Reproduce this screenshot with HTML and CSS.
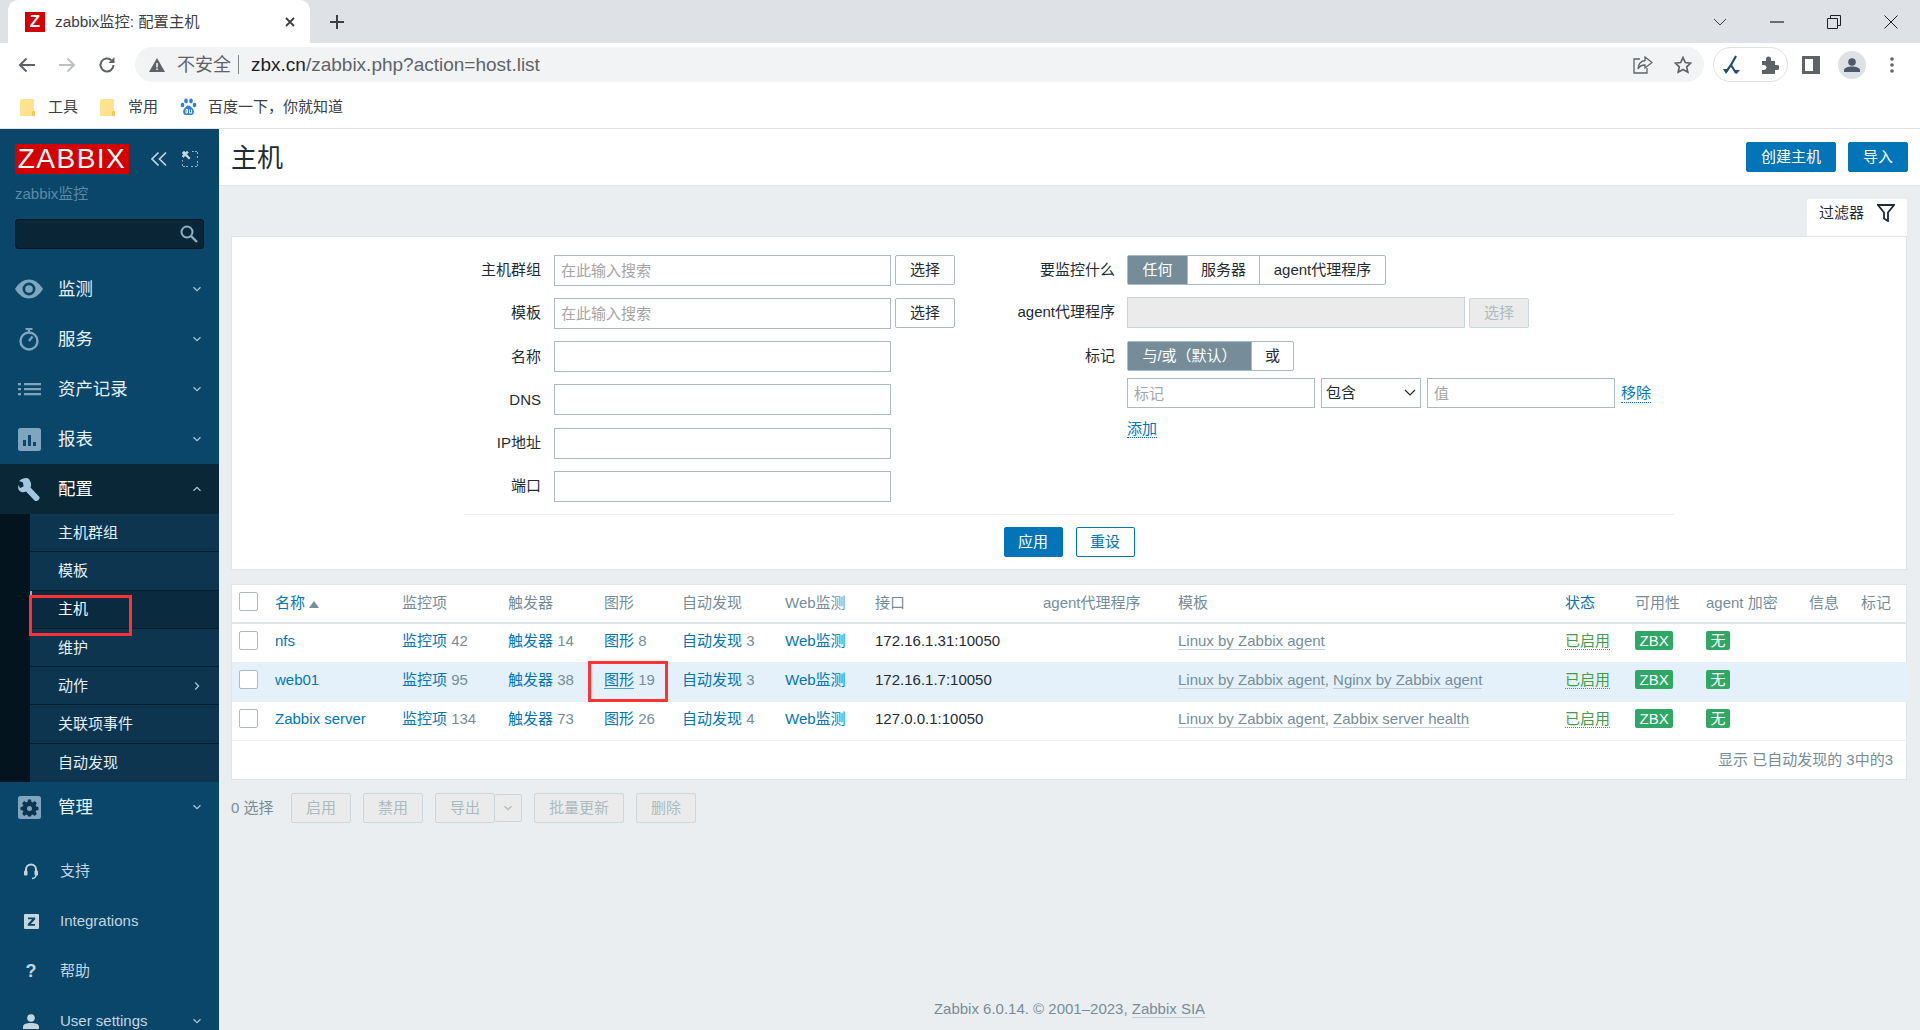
FILE: index.html
```html
<!DOCTYPE html>
<html lang="zh-CN">
<head>
    <meta charset="UTF-8">
    <title>zabbix监控: 配置主机</title>
    <link rel="stylesheet" href="styles.css">
</head>
<body>

    <svg class="sprite" width="0" height="0">
        <symbol id="down" viewBox="0 0 10 6"><path d="M1.5 1.2 5 4.6l3.5-3.4" fill="none" stroke="currentColor" stroke-width="1.3"/></symbol>
        <symbol id="up" viewBox="0 0 10 6"><path d="M1.5 4.8 5 1.4l3.5 3.4" fill="none" stroke="currentColor" stroke-width="1.3"/></symbol>
        <symbol id="right" viewBox="0 0 6 10"><path d="M1.2 1.5 4.6 5 1.2 8.5" fill="none" stroke="currentColor" stroke-width="1.3"/></symbol>
        <symbol id="folder" viewBox="0 0 15 17"><rect width="14" height="17" rx="1.500" fill="#fee28d"/><path d="M12 12h3v4q0 1-1 1h-2z" fill="#f3c75c"/></symbol>
    </svg>

    <!-- browser -->
    <div class="tabstrip">
        <div class="tab">
            <span class="favicon">Z</span>
            <span class="tab-title">zabbix监控: 配置主机</span>
            <svg class="tab-close" width="12" height="12" viewBox="0 0 12 12"><path d="M2 2l8 8M10 2l-8 8" stroke="#3c4043" stroke-width="1.800"/></svg>
        </div>
        <svg class="tab-new" width="16" height="16" viewBox="0 0 16 16"><path d="M8 1v14M1 8h14" stroke="#3c4043" stroke-width="2"/></svg>
        <div class="window-btns">
            <svg width="14" height="8" viewBox="0 0 14 8"><path d="M1 1l6 6 6-6" fill="none" stroke="#3c4043"/></svg>
            <svg width="14" height="2" viewBox="0 0 14 2"><path d="M0 1h14" stroke="#202124" stroke-width="1.200"/></svg>
            <svg width="14" height="14" viewBox="0 0 14 14"><path d="M.5 3.500h10v10H.5zM3.500 3.500v-3h10v10h-3" fill="none" stroke="#202124"/></svg>
            <svg width="14" height="14" viewBox="0 0 14 14"><path d="M.5.5l13 13M13.500.5l-13 13" stroke="#202124"/></svg>
        </div>
    </div>

    <div class="toolbar">
        <svg class="nav-btn" width="18" height="16" viewBox="0 0 18 16"><path d="M17 8H2M8.500 1.500 2 8l6.500 6.500" fill="none" stroke="#5f6368" stroke-width="2"/></svg>
        <svg class="nav-btn" width="18" height="16" viewBox="0 0 18 16"><path d="M1 8h15M9.500 1.500 16 8l-6.500 6.500" fill="none" stroke="#bdc1c6" stroke-width="2"/></svg>
        <svg class="nav-btn" width="18" height="18" viewBox="0 0 18 18"><path d="M15.500 9A6.500 6.500 0 1 1 13.600 4.400" fill="none" stroke="#5f6368" stroke-width="2"/><path d="M16.500 1v6h-6z" fill="#5f6368"/></svg>
        <div class="omnibox">
            <svg class="warn" width="16" height="14" viewBox="0 0 16 14"><path d="M8 0l8 14H0z" fill="#5f6368"/><path d="M7.200 5h1.600v4.500H7.200zM7.200 10.500h1.600V12H7.200z" fill="#f1f3f4"/></svg>
            <span class="insecure">不安全</span>
            <span class="pipe"></span>
            <span class="url"><b>zbx.cn</b>/zabbix.php?action=host.list</span>
            <svg class="omni-icon share" width="20" height="18" viewBox="0 0 20 18"><path d="M7 3H1v14h13v-5" fill="none" stroke="#5f6368" stroke-width="1.300"/><path d="M12 1l7 5.500-7 5.500V9c-3.500 0-5.500 1-7 4 .3-4.500 3-8 7-8.500z" fill="none" stroke="#5f6368" stroke-width="1.300"/></svg>
            <svg class="omni-icon" width="18" height="18" viewBox="0 0 18 18"><path d="M9 1.500l2.300 5 5.400.6-4 3.700 1.100 5.400L9 13.500l-4.800 2.700 1.100-5.400-4-3.700 5.400-.6z" fill="none" stroke="#5f6368" stroke-width="1.700"/></svg>
        </div>
        <div class="ext-pill">
            <svg width="18" height="20" viewBox="0 0 18 20"><path d="M13 1 8 10 3 17M8 10l5 8" fill="none" stroke="#25506e" stroke-width="2.200"/><path d="M0 14h6l-3 5zM10 15h7l-3.500 4z" fill="#25506e"/></svg>
            <svg width="18" height="18" viewBox="0 0 18 18"><path d="M1 5h4V3a2.500 2.500 0 0 1 5 0v2h4v4h2a2.500 2.500 0 0 1 0 5h-2v4H1v-4h2a2.500 2.500 0 0 0 0-5H1z" fill="#5f6368"/></svg>
        </div>
        <svg class="side-panel" width="18" height="18" viewBox="0 0 18 18"><path d="M0 0h18v18H0zM3 3v12h8V3z" fill="#5f6368" fill-rule="evenodd"/></svg>
        <span class="avatar">
            <svg width="16" height="14" viewBox="0 0 16 14"><circle cx="8" cy="4" r="3.800" fill="#4c5a6b"/><path d="M0 14v-2c0-2 4-3.500 8-3.500s8 1.500 8 3.500v2z" fill="#4c5a6b"/></svg>
        </span>
        <svg class="kebab" width="4" height="16" viewBox="0 0 4 16"><circle cx="2" cy="2" r="1.800" fill="#5f6368"/><circle cx="2" cy="8" r="1.800" fill="#5f6368"/><circle cx="2" cy="14" r="1.800" fill="#5f6368"/></svg>
    </div>

    <div class="bookmarks">
        <a class="bookmark"><svg width="15" height="17"><use href="#folder"/></svg>工具</a>
        <a class="bookmark"><svg width="15" height="17"><use href="#folder"/></svg>常用</a>
        <a class="bookmark baidu">
            <svg width="17" height="18" viewBox="0 0 17 18"><g fill="#2f7de1"><ellipse cx="2.500" cy="7" rx="1.800" ry="2.300"/><ellipse cx="6" cy="3" rx="1.800" ry="2.400"/><ellipse cx="11" cy="3" rx="1.800" ry="2.400"/><ellipse cx="14.500" cy="7" rx="1.800" ry="2.300"/><path d="M8.500 7.500c-2 0-3 2-4.500 3.500-1.500 1.500-1 6 1.500 6h6c2.500 0 3-4.500 1.500-6-1.500-1.500-2.500-3.500-4.500-3.500z"/></g><path d="M6 11.500v3.500h1.500v-3.500zM9.500 11.500v3.500h2v-3.500" fill="none" stroke="#fff"/></svg>
            百度一下，你就知道
        </a>
    </div>

    <div class="app">
        <!-- sidebar -->
        <aside class="sidebar">
            <div class="brand">
                <span class="logo">ZABBIX</span>
                <svg class="collapse" width="18" height="16" viewBox="0 0 18 16"><path d="M8.500 1.500 2 8l6.500 6.500M16 1.500 9.500 8l6.500 6.500" fill="none" stroke="#c4d5e0" stroke-width="1.700"/></svg>
                <svg class="kiosk" width="16" height="16" viewBox="0 0 16 16"><path d="M6 .5H.5V6M.5 9v1.500M.5 13v2.500H6M9 15.500h2M13 15.500h2.500V10M15.500 7V5M15.500 3V.5H9" fill="none" stroke="#8eb0c6" stroke-dasharray="2 1"/><path d="M1 1h6L5 3.200 8.500 7 7 8.500 3.200 5 1 7z" fill="#c4d5e0"/></svg>
            </div>
            <div class="server-name">zabbix监控</div>
            <div class="search">
                <svg width="18" height="18" viewBox="0 0 18 18"><circle cx="7" cy="7" r="5.500" fill="none" stroke="#8eb0c6" stroke-width="2"/><path d="M11 11l6 6" stroke="#8eb0c6" stroke-width="2.400"/></svg>
            </div>

            <nav class="menu">
                <a class="menu-item">
                    <span class="menu-icon"><svg width="28" height="20" viewBox="0 0 28 20"><path d="M0 10C4 3.500 9 .5 14 .5S24 3.500 28 10c-4 6.500-9 9.500-14 9.500S4 16.500 0 10zM14 3.500a6.500 6.500 0 1 0 0 13 6.500 6.500 0 0 0 0-13z" fill="#7fa6be" fill-rule="evenodd"/><circle cx="14" cy="10" r="3.800" fill="#7fa6be"/></svg></span>
                    监测<svg class="chev"><use href="#down"/></svg>
                </a>
                <a class="menu-item">
                    <span class="menu-icon"><svg width="20" height="23" viewBox="0 0 20 23"><circle cx="10" cy="13" r="8.500" fill="none" stroke="#7fa6be" stroke-width="2.400"/><path d="M6.500 1h7" stroke="#7fa6be" stroke-width="2"/><path d="M10 2v2M10 13l3.500-4.500" stroke="#7fa6be" stroke-width="2.200"/></svg></span>
                    服务<svg class="chev"><use href="#down"/></svg>
                </a>
                <a class="menu-item">
                    <span class="menu-icon"><svg width="23" height="14" viewBox="0 0 23 14"><path d="M0 1h3v2.200H0zM0 6h3v2.200H0zM0 11h3v2.200H0zM6 1h17v2.200H6zM6 6h17v2.200H6zM6 11h17v2.200H6z" fill="#7fa6be"/></svg></span>
                    资产记录<svg class="chev"><use href="#down"/></svg>
                </a>
                <a class="menu-item">
                    <span class="menu-icon"><svg width="23" height="23" viewBox="0 0 23 23"><rect width="23" height="23" rx="2.500" fill="#7fa6be"/><path d="M5 12h3v6H5zM10 7h3v11h-3zM15 14h3v4h-3z" fill="#0a466a"/></svg></span>
                    报表<svg class="chev"><use href="#down"/></svg>
                </a>
                <a class="menu-item active">
                    <span class="menu-icon"><svg width="23" height="23" viewBox="0 0 23 23"><path d="M8.500 0C5 0 2.500 1.500 1 3l4 1.500.5 4L2 10 .5 7C-.5 10 .5 13 3.500 14c1.500.5 3 .3 4.500-.5l9 9.500c1 .5 2.500 0 3.500-1s1.500-2 1-3l-9-9.500c1-2 .8-4.500-.5-6.500C11.500 1 10 0 8.500 0z" fill="#a3c7de"/></svg></span>
                    配置<svg class="chev"><use href="#up"/></svg>
                </a>
                <div class="submenu">
                    <a class="sub-item">主机群组</a>
                    <a class="sub-item">模板</a>
                    <a class="sub-item current">主机<span class="mark mark-host"></span></a>
                    <a class="sub-item">维护</a>
                    <a class="sub-item">动作<svg class="chev-r"><use href="#right"/></svg></a>
                    <a class="sub-item">关联项事件</a>
                    <a class="sub-item">自动发现</a>
                </div>
                <a class="menu-item">
                    <span class="menu-icon"><svg width="23" height="23" viewBox="0 0 23 23"><rect width="23" height="23" rx="2.500" fill="#7fa6be"/><path d="M10 3.500h3l.4 2.300 1.400.6 2-1.300 2.100 2.100-1.300 2 .6 1.400 2.300.4v3l-2.300.4-.6 1.400 1.300 2-2.100 2.100-2-1.300-1.400.6-.4 1.300h-3l-.4-1.300-1.400-.6-2 1.300-2.100-2.100 1.300-2-.6-1.400-2.300-.4v-3l2.300-.4.6-1.400-1.300-2 2.100-2.100 2 1.300 1.400-.6z" fill="#0d3550"/><circle cx="11.500" cy="12.500" r="2.500" fill="#7fa6be"/></svg></span>
                    管理<svg class="chev"><use href="#down"/></svg>
                </a>
            </nav>

            <nav class="menu menu-bottom">
                <a class="util-item">
                    <span class="menu-icon"><svg width="14" height="17" viewBox="0 0 14 17"><path d="M2 9V6.500a5 5 0 0 1 10 0V9" fill="none" stroke="#c4d5e0" stroke-width="2"/><rect x="0" y="7.500" width="3.500" height="5" rx="1" fill="#c4d5e0"/><rect x="10.500" y="7.500" width="3.500" height="5" rx="1" fill="#c4d5e0"/><path d="M12 12c0 2-2 3.500-4 3.500" fill="none" stroke="#c4d5e0" stroke-width="1.500"/></svg></span>
                    支持
                </a>
                <a class="util-item">
                    <span class="menu-icon"><svg width="15" height="15" viewBox="0 0 15 15"><rect width="15" height="15" rx="1" fill="#c4d5e0"/><path d="M4 3.500h7.200v1.800L6.800 10H11v1.800H3.800V10l4.400-4.700H4z" fill="#0a466a"/></svg></span>
                    Integrations
                </a>
                <a class="util-item">
                    <span class="menu-icon help-mark">?</span>
                    帮助
                </a>
                <a class="util-item">
                    <span class="menu-icon"><svg width="16" height="15" viewBox="0 0 16 15"><circle cx="8" cy="4" r="3.800" fill="#c4d5e0"/><path d="M0 15v-2.500C0 10 4 9 8 9s8 1 8 3.500V15z" fill="#c4d5e0"/></svg></span>
                    User settings<svg class="chev"><use href="#down"/></svg>
                </a>
            </nav>
        </aside>

        <main class="main">
            <header class="page-head">
                <h1>主机</h1>
                <div class="head-btns">
                    <button class="btn-primary btn-create">创建主机</button>
                    <button class="btn-primary btn-import">导入</button>
                </div>
            </header>

            <div class="filter-tabs">
                <div class="filter-tab">
                    过滤器
                    <svg width="18" height="18" viewBox="0 0 18 18"><path d="M1 1h16l-6 7.500V17l-4-2.500v-6z" fill="none" stroke="#1f2c33" stroke-width="1.800"/></svg>
                </div>
            </div>

            <!-- filter -->
            <section class="filter">
                <div class="filter-cols">
                    <div class="form-left">
                        <label>主机群组</label>
                        <div class="field"><input class="txt txt-wide" placeholder="在此输入搜索"><button class="btn-alt">选择</button></div>
                        <label>模板</label>
                        <div class="field"><input class="txt txt-wide" placeholder="在此输入搜索"><button class="btn-alt">选择</button></div>
                        <label>名称</label>
                        <div class="field"><input class="txt txt-wide"></div>
                        <label>DNS</label>
                        <div class="field"><input class="txt txt-wide"></div>
                        <label>IP地址</label>
                        <div class="field"><input class="txt txt-wide"></div>
                        <label>端口</label>
                        <div class="field"><input class="txt txt-wide"></div>
                    </div>
                    <div class="form-right">
                        <label>要监控什么</label>
                        <div class="seg">
                            <span class="seg-item on seg-any">任何</span><span class="seg-item seg-server">服务器</span><span class="seg-item seg-proxy">agent代理程序</span>
                        </div>
                        <label>agent代理程序</label>
                        <div class="field"><input class="txt txt-proxy" disabled><button class="btn-alt btn-off" disabled>选择</button></div>
                        <label class="tag-label">标记</label>
                        <div class="seg tag-seg">
                            <span class="seg-item on seg-andor">与/或（默认）</span><span class="seg-item seg-or">或</span>
                        </div>
                        <span></span>
                        <div class="tag-row">
                            <input class="txt txt-tag" placeholder="标记">
                            <span class="select-wrap">
                                <select class="tag-op"><option>包含</option></select>
                                <svg class="select-arrow" width="12" height="7" viewBox="0 0 12 7"><path d="M1 1l5 5 5-5" fill="none" stroke="#1f2c33" stroke-width="1.200"/></svg>
                            </span>
                            <input class="txt txt-tag" placeholder="值">
                            <a class="link-dotted">移除</a>
                        </div>
                        <span></span>
                        <div class="tag-add"><a class="link-dotted">添加</a></div>
                    </div>
                </div>
                <div class="filter-actions">
                    <button class="btn-primary btn-apply">应用</button>
                    <button class="btn-reset">重设</button>
                </div>
            </section>

            <!-- hosts -->
            <section class="hosts">
                <table>
                    <colgroup>
                        <col class="c-check"><col class="c-name"><col class="c-items"><col class="c-trig"><col class="c-graph"><col class="c-disc"><col class="c-web"><col class="c-iface"><col class="c-proxy"><col class="c-tpl"><col class="c-status"><col class="c-avail"><col class="c-enc"><col class="c-info"><col class="c-tags">
                    </colgroup>
                    <thead>
                        <tr>
                            <th class="th-check"><input type="checkbox" class="check"></th>
                            <th><a class="link">名称</a> <span class="sort-up"></span></th>
                            <th>监控项</th>
                            <th>触发器</th>
                            <th>图形</th>
                            <th>自动发现</th>
                            <th>Web监测</th>
                            <th>接口</th>
                            <th>agent代理程序</th>
                            <th>模板</th>
                            <th><a class="link">状态</a></th>
                            <th>可用性</th>
                            <th>agent 加密</th>
                            <th>信息</th>
                            <th>标记</th>
                        </tr>
                    </thead>
                    <tbody>
                        <tr>
                            <td><input type="checkbox" class="check"></td>
                            <td><a class="link">nfs</a></td>
                            <td><a class="link">监控项</a> <span class="count">42</span></td>
                            <td><a class="link">触发器</a> <span class="count">14</span></td>
                            <td><a class="link">图形</a> <span class="count">8</span></td>
                            <td><a class="link">自动发现</a> <span class="count">3</span></td>
                            <td><a class="link">Web监测</a></td>
                            <td>172.16.1.31:10050</td>
                            <td></td>
                            <td><a class="tpl">Linux by Zabbix agent</a></td>
                            <td><a class="enabled">已启用</a></td>
                            <td><span class="badge">ZBX</span></td>
                            <td><span class="badge">无</span></td>
                            <td></td>
                            <td></td>
                        </tr>
                        <tr class="hover">
                            <td><input type="checkbox" class="check"></td>
                            <td><a class="link">web01</a></td>
                            <td><a class="link">监控项</a> <span class="count">95</span></td>
                            <td><a class="link">触发器</a> <span class="count">38</span></td>
                            <td class="marked"><a class="link link-hover">图形</a> <span class="count">19</span><span class="mark mark-graph"></span></td>
                            <td><a class="link">自动发现</a> <span class="count">3</span></td>
                            <td><a class="link">Web监测</a></td>
                            <td>172.16.1.7:10050</td>
                            <td></td>
                            <td><a class="tpl">Linux by Zabbix agent</a><span class="count">,</span> <a class="tpl">Nginx by Zabbix agent</a></td>
                            <td><a class="enabled">已启用</a></td>
                            <td><span class="badge">ZBX</span></td>
                            <td><span class="badge">无</span></td>
                            <td></td>
                            <td></td>
                        </tr>
                        <tr>
                            <td><input type="checkbox" class="check"></td>
                            <td><a class="link">Zabbix server</a></td>
                            <td><a class="link">监控项</a> <span class="count">134</span></td>
                            <td><a class="link">触发器</a> <span class="count">73</span></td>
                            <td><a class="link">图形</a> <span class="count">26</span></td>
                            <td><a class="link">自动发现</a> <span class="count">4</span></td>
                            <td><a class="link">Web监测</a></td>
                            <td>127.0.0.1:10050</td>
                            <td></td>
                            <td><a class="tpl">Linux by Zabbix agent</a><span class="count">,</span> <a class="tpl">Zabbix server health</a></td>
                            <td><a class="enabled">已启用</a></td>
                            <td><span class="badge">ZBX</span></td>
                            <td><span class="badge">无</span></td>
                            <td></td>
                            <td></td>
                        </tr>
                    </tbody>
                </table>
                <div class="paging">显示 已自动发现的 3中的3</div>
            </section>

            <div class="actions">
                <span class="selected">0 选择</span>
                <button class="btn-off btn-bulk">启用</button>
                <button class="btn-off btn-bulk">禁用</button>
                <span class="split">
                    <button class="btn-off btn-bulk">导出</button><button class="btn-off btn-arrow"><svg width="10" height="6"><use href="#down"/></svg></button>
                </span>
                <button class="btn-off btn-mass">批量更新</button>
                <button class="btn-off btn-bulk">删除</button>
            </div>

            <footer class="footer">Zabbix 6.0.14. © 2001–2023, <a class="footer-link">Zabbix SIA</a></footer>
        </main>
    </div>

</body>
</html>
```

FILE: styles.css
```css
* {
    box-sizing: border-box;
}

html, body {
    height: 100%;
}

body {
    margin: 0;
    display: flex;
    flex-direction: column;
    height: 1030px;
    overflow: hidden;
    font-family: "Liberation Sans", "Noto Sans CJK SC", sans-serif;
    font-size: 15px;
    line-height: 18px;
    color: #1f2c33;
    background: #fff;
}

.sprite {
    position: absolute;
}

/* browser */
.tabstrip {
    display: flex;
    align-items: center;
    height: 43px;
    padding-left: 8px;
    background: #dee1e6;
    flex-shrink: 0;
}

.tab {
    display: flex;
    align-items: center;
    width: 302px;
    height: 43px;
    padding: 0 14px 0 17px;
    background: #fff;
    border-radius: 10px 10px 0 0;
}

.favicon {
    width: 20px;
    height: 20px;
    margin-right: 10px;
    background: #d40000;
    color: #fff;
    font-weight: bold;
    font-size: 17px;
    line-height: 20px;
    text-align: center;
}

.tab-title {
    flex: 1;
    font-size: 15.300px;
    color: #3c4043;
}

.tab-new {
    margin-left: 19px;
}

.window-btns {
    display: flex;
    align-items: center;
    gap: 43px;
    margin-left: auto;
    padding-right: 22px;
}

.toolbar {
    display: flex;
    align-items: center;
    height: 47px;
    padding: 0 0 4px 18px;
    flex-shrink: 0;
}

.nav-btn {
    margin-right: 22px;
}

.nav-btn:nth-child(3) {
    margin-right: 19px;
}

.omnibox {
    display: flex;
    align-items: center;
    width: 1569px;
    height: 35px;
    padding-left: 14px;
    background: #f1f3f4;
    border-radius: 18px;
}

.warn {
    margin-right: 12px;
}

.insecure {
    font-size: 18px;
    color: #5f6368;
}

.pipe {
    width: 1px;
    height: 19px;
    margin: 0 12px 0 7px;
    background: #80868b;
}

.url {
    flex: 1;
    font-size: 19px;
    color: #5f6368;
}

.url b {
    font-weight: normal;
    color: #202124;
}

.omni-icon {
    margin-right: 12px;
}

.share {
    margin-right: 21px;
}

.ext-pill {
    display: flex;
    align-items: center;
    justify-content: space-between;
    width: 75px;
    height: 35px;
    margin-left: 9px;
    padding: 0 8px 0 9px;
    border: 1px solid #dee1e6;
    border-radius: 18px;
}

.side-panel {
    margin-left: 14px;
}

.avatar {
    display: flex;
    align-items: center;
    justify-content: center;
    width: 28px;
    height: 28px;
    margin-left: 18px;
    background: #dee1e6;
    border-radius: 50%;
}

.kebab {
    margin-left: 24px;
}

.bookmarks {
    display: flex;
    align-items: center;
    gap: 22px;
    height: 39px;
    padding: 0 0 4px 20px;
    border-bottom: 1px solid #dfe1e5;
    flex-shrink: 0;
}

.bookmark {
    display: flex;
    align-items: center;
    gap: 13px;
    font-size: 15px;
    color: #3c4043;
}

.baidu {
    gap: 11px;
}

/* layout */
.app {
    display: flex;
    flex: 1;
    min-height: 0;
}

.sidebar {
    width: 219px;
    flex-shrink: 0;
    padding-top: 15px;
    background: #0a466a;
    overflow: hidden;
}

.brand {
    display: flex;
    align-items: center;
    height: 30px;
    padding-left: 15px;
}

.logo {
    width: 114px;
    height: 30px;
    background: #d40000;
    color: #fff;
    font-size: 28px;
    line-height: 30px;
    letter-spacing: 1.500px;
    text-align: center;
}

.collapse {
    margin-left: 21px;
}

.kiosk {
    margin-left: 14px;
}

.server-name {
    margin: 11px 0 0 15px;
    color: #5d8aa6;
}

.search {
    display: flex;
    align-items: center;
    justify-content: flex-end;
    width: 189px;
    height: 30px;
    margin: 16px 0 15px 15px;
    padding-right: 5px;
    background: #0a2636;
    border: 1px solid #04141e;
    border-radius: 3px;
}

.menu-item {
    display: flex;
    align-items: center;
    height: 50px;
    font-size: 17.400px;
    color: #e7f0f6;
}

.menu-item.active {
    background: #0a2738;
    color: #fff;
}

.menu-icon {
    display: flex;
    align-items: center;
    justify-content: center;
    width: 58px;
    flex-shrink: 0;
}

.chev {
    width: 10px;
    height: 6px;
    margin-left: auto;
    margin-right: 17px;
    color: #a9c3d4;
}

.submenu {
    height: 268px;
    padding-left: 30px;
    background: #04141e;
}

.sub-item {
    display: flex;
    align-items: center;
    position: relative;
    height: 38.300px;
    padding-left: 28px;
    background: #0d3550;
    border-bottom: 1px solid #041e2e;
    color: #e7f0f6;
}

.sub-item.current {
    background: #0a2a40;
    border-left: 2px solid #7fb8dc;
    padding-left: 26px;
    color: #fff;
}

.sub-item:last-child {
    border-bottom: 0;
}

.chev-r {
    width: 6px;
    height: 10px;
    margin-left: auto;
    margin-right: 19px;
    color: #a9c3d4;
}

.menu-bottom {
    margin-top: 14px;
}

.util-item {
    display: flex;
    align-items: center;
    height: 50px;
    padding-left: 2px;
    color: #c4d5e0;
}

.help-mark {
    font-size: 18px;
    font-weight: bold;
}

.mark {
    position: absolute;
    z-index: 1;
    border: 3px solid #f33;
    pointer-events: none;
}

.mark-host {
    left: -3px;
    top: 4px;
    width: 103px;
    height: 41px;
}

.main {
    display: flex;
    flex-direction: column;
    flex: 1;
    min-width: 0;
    background: #ebeef0;
}

.page-head {
    display: flex;
    align-items: center;
    justify-content: space-between;
    height: 57px;
    padding: 0 12px;
    background: #fff;
    border-bottom: 1px solid #dfe4e7;
    flex-shrink: 0;
}

h1 {
    margin: 1px 0 0;
    font-size: 26px;
    font-weight: normal;
    line-height: 30px;
}

.head-btns {
    display: flex;
    gap: 12px;
}

button {
    height: 30px;
    padding: 0;
    font: inherit;
    border-radius: 2px;
}

.btn-primary {
    background: #0275b8;
    border: 1px solid #0275b8;
    color: #fff;
}

.btn-create {
    width: 90px;
}

.btn-import {
    width: 60px;
}

.filter-tabs {
    display: flex;
    justify-content: flex-end;
    padding: 13px 13px 0 0;
    flex-shrink: 0;
}

.filter-tab {
    display: flex;
    align-items: flex-start;
    justify-content: space-between;
    width: 100px;
    height: 37px;
    padding: 5px 12px 0 12px;
    background: #fff;
    border-radius: 2px 2px 0 0;
}

.filter {
    margin: 0 13px 0 12px;
    height: 334px;
    padding-top: 18px;
    background: #fff;
    border: 1px solid #dfe4e7;
    flex-shrink: 0;
}

.filter-cols {
    display: flex;
    margin-left: -1px;
}

.form-left {
    display: grid;
    grid-template-columns: 310px auto;
    grid-auto-rows: 30.250px;
    column-gap: 13px;
    row-gap: 13px;
    width: 770px;
    height: 246px;
}

.form-right {
    display: grid;
    grid-template-columns: 114px auto;
    grid-auto-rows: auto;
    column-gap: 12px;
    row-gap: 12px;
    align-content: start;
}

label {
    text-align: right;
    line-height: 30px;
    white-space: nowrap;
}

.field {
    display: flex;
    align-items: center;
    gap: 4px;
}

.txt {
    height: 30px;
    padding: 0 6px;
    font: inherit;
    color: #1f2c33;
    background: #fff;
    border: 1px solid #acbbc2;
    outline: none;
}

.txt::placeholder {
    color: #a5a5a5;
    opacity: 1;
}

.txt[disabled] {
    background: #ebebeb;
    border-color: #c9d3d8;
}

.txt-wide {
    width: 337px;
    height: 31px;
}

.txt-proxy {
    width: 338px;
    height: 31px;
}

.btn-alt {
    width: 60px;
    background: #fff;
    border: 1px solid #acbbc2;
    color: #1f2c33;
}

.btn-off {
    background: #ebebeb;
    border: 1px solid #cdd6da;
    color: #acbbc2;
}

.seg {
    display: flex;
    height: 30px;
    line-height: 28px;
    width: max-content;
    background: #fff;
    border: 1px solid #acbbc2;
    border-radius: 2px;
}

.seg-item {
    text-align: center;
    border-left: 1px solid #acbbc2;
}

.seg-item:first-child {
    border-left: 0;
}

.seg-item.on {
    background: #768d99;
    color: #fff;
}

.seg-any {
    width: 59px;
}

.seg-server {
    width: 72px;
}

.seg-proxy {
    width: 126px;
}

.seg-andor {
    width: 123px;
}

.seg-or {
    width: 42px;
}

.tag-label {
    margin-top: 1px;
}

.tag-seg {
    margin-top: 1px;
}

.tag-row {
    display: flex;
    align-items: center;
    margin-top: -5px;
}

.txt-tag {
    width: 188px;
}

.select-wrap {
    display: flex;
    position: relative;
    margin: 0 6px;
}

.tag-op {
    appearance: none;
    width: 100px;
    height: 30px;
    padding-left: 4px;
    font: inherit;
    color: #1f2c33;
    background: #fff;
    border: 1px solid #acbbc2;
    border-radius: 0;
}

.select-arrow {
    position: absolute;
    right: 5px;
    top: 11px;
}

.link-dotted {
    margin-left: 6px;
    color: #0275b8;
    border-bottom: 1px dotted #0275b8;
}

.tag-add {
    height: 20px;
}

.tag-add .link-dotted {
    margin-left: 0;
}

.filter-actions {
    display: flex;
    justify-content: center;
    gap: 13px;
    margin: 13px 232px 0;
    padding-top: 12px;
    border-top: 1px solid #ebeef0;
}

.btn-apply {
    width: 59px;
}

.btn-reset {
    width: 59px;
    background: #fff;
    border: 1px solid #0275b8;
    color: #0275b8;
}

/* hosts table */
.hosts {
    margin: 14px 13px 0 12px;
    height: 196px;
    background: #fff;
    border: 1px solid #dfe4e7;
    flex-shrink: 0;
}

table {
    width: 1675px;
    table-layout: fixed;
    border-collapse: collapse;
}

.c-check { width: 43px; }
.c-name { width: 127px; }
.c-items { width: 106px; }
.c-trig { width: 96px; }
.c-graph { width: 78px; }
.c-disc { width: 103px; }
.c-web { width: 90px; }
.c-iface { width: 168px; }
.c-proxy { width: 135px; }
.c-tpl { width: 387px; }
.c-status { width: 70px; }
.c-avail { width: 71px; }
.c-enc { width: 103px; }
.c-info { width: 52px; }
.c-tags { width: 46px; }

th, td {
    padding: 0 0 4px;
    text-align: left;
    font-weight: normal;
    white-space: nowrap;
}

th {
    height: 38px;
    padding-bottom: 2px;
    color: #768d99;
    border-bottom: 2px solid #dfe4e7;
}

th.th-check {
    padding-bottom: 4px;
}

td {
    height: 39px;
    border-bottom: 1px solid #ebeef0;
}

.hover td {
    background: #e4f1fb;
}

.check {
    appearance: none;
    display: block;
    width: 19px;
    height: 19px;
    margin: 0 0 0 7px;
    background: #fff;
    border: 1px solid #acbbc2;
    border-radius: 2px;
}

.link {
    color: #0275b8;
}

.link-hover {
    border-bottom: 1px solid #4a9fd4;
}

.sort-up {
    display: inline-block;
    width: 0;
    height: 0;
    border: 5px solid transparent;
    border-top: 0;
    border-bottom: 7px solid #768d99;
}

.count {
    color: #768d99;
}

.tpl {
    color: #768d99;
    border-bottom: 1px solid #c5cfd4;
}

.enabled {
    color: #429e47;
    border-bottom: 1px dotted #429e47;
}

.badge {
    display: inline-block;
    padding: 0 4.500px;
    height: 19px;
    line-height: 19px;
    background: #2fa866;
    color: #fff;
    border-radius: 2px;
}

.marked {
    position: relative;
}

.mark-graph {
    left: -16px;
    top: -2px;
    width: 80px;
    height: 41px;
}

.paging {
    padding: 10px 13px 0 0;
    text-align: right;
    color: #768d99;
}

/* bottom */
.actions {
    display: flex;
    align-items: center;
    gap: 12px;
    margin: 13px 0 0 12px;
    flex-shrink: 0;
}

.selected {
    width: 48px;
    color: #768d99;
}

.split {
    display: flex;
}

.btn-bulk {
    width: 60px;
}

.btn-arrow {
    display: flex;
    align-items: center;
    justify-content: center;
    width: 27px;
    height: 28px;
    margin-top: 1px;
    border-left: 0;
}

.btn-mass {
    width: 90px;
}

.footer {
    margin-top: auto;
    padding-bottom: 12px;
    text-align: center;
    color: #768d99;
}

.footer-link {
    border-bottom: 1px solid #c5cfd4;
}
```
